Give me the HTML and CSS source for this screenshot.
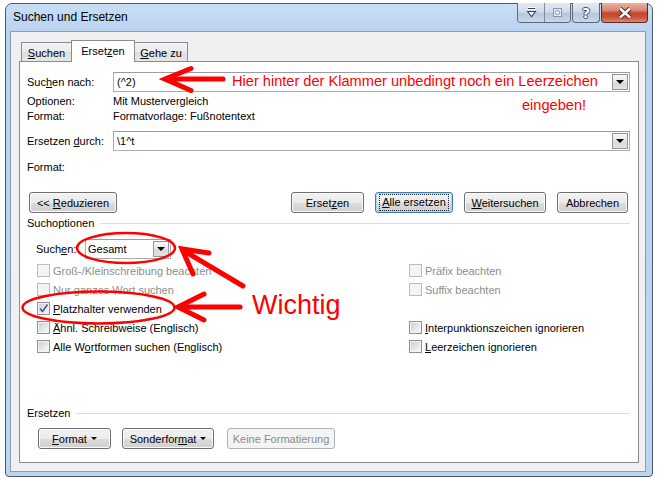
FILE: index.html
```html
<!DOCTYPE html>
<html lang="de">
<head>
    <meta charset="UTF-8">
    <title>Suchen und Ersetzen</title>
    <link rel="stylesheet" href="styles.css">
</head>
<body>
    <div class="window">
        <div class="titlebar">
            <span class="title">Suchen und Ersetzen</span>
            <div class="caption">
                <div class="cap-group">
                    <span class="cap-btn first">
                        <svg width="11" height="11" viewBox="0 0 11 11">
                            <path d="M2 1.5 H9" stroke="#fff" stroke-width="3"/>
                            <path d="M2 1.5 H9" stroke="#34465c" stroke-width="1.2"/>
                            <path d="M1.5 4.5 L5.5 9.5 L9.5 4.5 Z" fill="#fff" stroke="#34465c" stroke-width="1.1"/>
                        </svg>
                    </span>
                    <span class="cap-btn">
                        <svg width="11" height="11" viewBox="0 0 11 11">
                            <rect x="1.5" y="1.5" width="8" height="8" fill="#e9eef4" stroke="#8796a8"/>
                            <circle cx="5.5" cy="5.5" r="2.2" fill="none" stroke="#8796a8"/>
                        </svg>
                    </span>
                </div>
                <span class="cap-btn help">?</span>
                <span class="cap-btn close">
                    <svg width="16" height="12" viewBox="0 0 16 12">
                        <path d="M3 1.5 L13 10.5 M13 1.5 L3 10.5" stroke="#3d1a12" stroke-width="4.4"/>
                        <path d="M3 1.5 L13 10.5 M13 1.5 L3 10.5" stroke="#fff" stroke-width="2.6"/>
                    </svg>
                </span>
            </div>
        </div>

        <div class="client">
            <div class="tabs">
                <span class="tab tab-first"><span><u>S</u>uchen</span></span>
                <span class="tab active"><span>Erset<u>z</u>en</span></span>
                <span class="tab tab-last"><span><u>G</u>ehe zu</span></span>
            </div>

            <div class="pane">
                <div class="field-row first-field">
                    <span class="field-label">Suc<u>h</u>en nach:</span>
                    <div class="combo">
                        <span>(^2)</span>
                        <span class="combo-arrow"><i class="tri"></i></span>
                    </div>
                </div>
                <div class="info">
                    <span class="field-label">Optionen:</span>
                    <span>Mit Mustervergleich</span>
                </div>
                <div class="info">
                    <span class="field-label">Format:</span>
                    <span>Formatvorlage: Fußnotentext</span>
                </div>

                <div class="field-row second-field">
                    <span class="field-label">Ersetzen <u>d</u>urch:</span>
                    <div class="combo">
                        <span>\1^t</span>
                        <span class="combo-arrow"><i class="tri"></i></span>
                    </div>
                </div>
                <div class="info format-line">
                    <span class="field-label">Format:</span>
                </div>

                <div class="btn-row">
                    <span class="btn btn-reduce"><span>&lt;&lt; <u>R</u>eduzieren</span></span>
                    <div class="btn-group">
                        <span class="btn w-ersetzen"><span>Erset<u>z</u>en</span></span>
                        <span class="btn w-alle focused"><span class="focus-rect"><u>A</u>lle ersetzen</span></span>
                        <span class="btn w-weiter"><span><u>W</u>eitersuchen</span></span>
                        <span class="btn w-abbrechen"><span>Abbrechen</span></span>
                    </div>
                </div>

                <div class="group-title search-options"><span>Suchoptionen</span></div>

                <div class="scope-row">
                    <span class="scope-label">Such<u>e</u>n:</span>
                    <div class="combo scope-combo">
                        <span>Gesamt</span>
                        <span class="combo-arrow"><i class="tri"></i></span>
                    </div>
                </div>

                <div class="options">
                    <label class="opt disabled"><span class="box"></span><span>Groß-/Kleinschreibung beachten</span></label>
                    <label class="opt disabled"><span class="box"></span><span>Präfix beachten</span></label>

                    <label class="opt disabled"><span class="box"></span><span>Nur ganzes Wort suchen</span></label>
                    <label class="opt disabled"><span class="box"></span><span>Suffix beachten</span></label>

                    <label class="opt">
                        <span class="box checked">
                            <svg width="11" height="11" viewBox="0 0 11 11"><path d="M2 5.5 L4.5 8.5 L9.5 1.5" fill="none" stroke="#42588a" stroke-width="1.6"/></svg>
                        </span>
                        <span><u>P</u>latzhalter verwenden</span>
                    </label>
                    <span></span>

                    <label class="opt"><span class="box"></span><span><u>Ä</u>hnl. Schreibweise (Englisch)</span></label>
                    <label class="opt"><span class="box"></span><span><u>I</u>nterpunktionszeichen ignorieren</span></label>

                    <label class="opt"><span class="box"></span><span>Alle W<u>o</u>rtformen suchen (Englisch)</span></label>
                    <label class="opt"><span class="box"></span><span><u>L</u>eerzeichen ignorieren</span></label>
                </div>

                <div class="group-title replace-group"><span>Ersetzen</span></div>

                <div class="bottom-row">
                    <span class="btn w-format"><span><u>F</u>ormat</span><i class="tri small"></i></span>
                    <span class="btn w-sonder"><span>Sonderfor<u>m</u>at</span><i class="tri small"></i></span>
                    <span class="btn w-keine disabled-btn"><span>Keine Formatierung</span></span>
                </div>
            </div>
        </div>
    </div>

    <!-- red annotations drawn over the dialog -->
    <svg class="marks" width="657" height="479" viewBox="0 0 657 479">
        <g fill="none" stroke="#ff0000" stroke-width="5" stroke-linecap="round" stroke-linejoin="miter">
            <path d="M223 79 H168"/>
            <path d="M191 68.5 L165 79 L191 90.5"/>

            <path d="M243 286 L186 252"/>
            <path d="M209 253 L182 249 L193 274"/>

            <path d="M240 307 H182"/>
            <path d="M204 294 L178 307 L204 320"/>
        </g>
        <g fill="none" stroke="#ff0000" stroke-width="2.5">
            <ellipse cx="126" cy="248" rx="49" ry="15"/>
            <ellipse cx="98.5" cy="307.5" rx="76" ry="16"/>
        </g>
    </svg>
    <div class="note note-hier">Hier hinter der Klammer unbedingt noch ein Leerzeichen</div>
    <div class="note note-eingeben">eingeben!</div>
    <div class="note note-wichtig">Wichtig</div>
</body>
</html>
```

FILE: styles.css
```css
body {
    margin: 0;
    width: 657px;
    height: 479px;
    position: relative;
    overflow: hidden;
    background-color: white;
    color: black;
    font-family: "Liberation Sans", Arial, sans-serif;
    font-size: 11px;
}

u {
    text-decoration: underline;
    text-underline-offset: 1px;
}

/* window frame */
.window {
    margin: 3px 0 0 5px;
    width: 648px;
    height: 474px;
    box-sizing: border-box;
    border: 1px solid #4d5a69;
    border-radius: 7px 7px 4px 4px;
    background: linear-gradient(#c9def5, #b9d2ef 28px, #bcd6f2);
    display: flex;
    flex-direction: column;
}

.titlebar {
    height: 27px;
    display: flex;
    align-items: flex-start;
}

.title {
    padding: 6px 0 0 7px;
    font-size: 12px;
    line-height: 15px;
    color: #000;
}

.caption {
    margin-left: auto;
    margin-right: 4px;
    margin-top: -1px;
    display: flex;
    gap: 1px;
}

.cap-group {
    display: flex;
    border: 1px solid #5b6a7d;
    border-top: none;
    border-radius: 0 0 4px 4px;
    overflow: hidden;
}

.cap-btn {
    width: 26px;
    height: 19px;
    display: flex;
    align-items: center;
    justify-content: center;
    background: linear-gradient(#e1e9f3, #d0dcea 48%, #b7c8dc 52%, #c8d7e8);
}

.cap-group .cap-btn.first {
    border-right: 1px solid #7c8ca0;
}

.cap-group .cap-btn + .cap-btn {
    width: 25px;
}

.help {
    width: 26px;
    border: 1px solid #5b6a7d;
    border-top: none;
    border-radius: 0 0 4px 4px;
    font-family: "DejaVu Sans", sans-serif;
    font-weight: bold;
    font-size: 14px;
    color: #fff;
    text-shadow: 1px 0 0 #3a4d64, -1px 0 0 #3a4d64, 0 1px 0 #3a4d64, 0 -1px 0 #3a4d64;
}

.close {
    width: 45px;
    border: 1px solid #5a2a20;
    border-top: none;
    border-radius: 0 0 4px 4px;
    background: linear-gradient(#eab2a2, #d98470 40%, #c5462d 52%, #c9513a 75%, #de8a70);
}

/* client area */
.client {
    flex: 1;
    margin: 0 6px 4px 4px;
    border: 1px solid #8a9db5;
    background-color: #f0f0f0;
    padding: 8px 6px 8px 8px;
    display: flex;
    flex-direction: column;
}

.tabs {
    display: flex;
    align-items: flex-start;
    margin-left: 2px;
    margin-bottom: -1px;
    height: 22px;
    position: relative;
    z-index: 1;
}

.tab {
    margin-top: 2px;
    height: 19px;
    box-sizing: border-box;
    border: 1px solid #898c95;
    border-bottom: none;
    background: linear-gradient(#f3f3f3, #ebebeb 50%, #dedede 50%, #e6e6e6);
    display: flex;
    align-items: center;
    justify-content: center;
    padding-top: 2px;
}

.tab-first {
    width: 51px;
}

.tab.active {
    margin-top: 0;
    margin-left: -1px;
    width: 64px;
    height: 22px;
    padding-top: 0;
    padding-bottom: 1px;
    background: white;
    position: relative;
    z-index: 2;
}

.tab-last {
    margin-left: -1px;
    width: 54px;
}

.pane {
    flex: 1;
    background-color: white;
    border: 1px solid #898c95;
    padding: 0 8px 0 7px;
}

.field-row {
    display: flex;
    align-items: center;
}

.first-field {
    margin-top: 10px;
}

.second-field {
    margin-top: 7px;
}

.field-label {
    width: 86px;
    flex-shrink: 0;
}

.combo {
    flex: 1;
    height: 20px;
    box-sizing: border-box;
    border: 1px solid #abadb3;
    border-top-color: #9a9ca3;
    padding-left: 3px;
    display: flex;
    align-items: center;
    background: white;
}

.combo-arrow {
    margin-left: auto;
    margin-right: 1px;
    width: 16px;
    height: 16px;
    box-sizing: border-box;
    border: 1px solid #8f959d;
    background: linear-gradient(#f7f7f7, #e8e8e8 50%, #d9d9d9 51%, #e3e3e3);
    display: flex;
    align-items: center;
    justify-content: center;
}

.tri {
    width: 0;
    height: 0;
    border-left: 4px solid transparent;
    border-right: 4px solid transparent;
    border-top: 4px solid black;
}

.tri.small {
    border-left-width: 3px;
    border-right-width: 3px;
    border-top-width: 3px;
    margin-left: 4px;
    margin-bottom: 1px;
}

.info {
    display: flex;
    line-height: 15px;
}

.first-field + .info {
    margin-top: 2px;
}

.format-line {
    margin-top: 9px;
}

/* buttons */
.btn {
    height: 21px;
    box-sizing: border-box;
    border: 1px solid #707070;
    border-radius: 3px;
    background: linear-gradient(#f2f2f2, #ebebeb 50%, #dddddd 50%, #cfcfcf);
    box-shadow: inset 0 0 0 1px #fbfbfb;
    display: flex;
    align-items: center;
    justify-content: center;
    user-select: none;
}

.btn-row {
    display: flex;
    margin-top: 17px;
}

.btn-reduce {
    margin-left: 2px;
    width: 88px;
}

.btn-group {
    margin-left: auto;
    margin-right: 2px;
    display: flex;
    gap: 11px;
}

.w-ersetzen {
    width: 73px;
}

.w-alle {
    width: 78px;
}

.w-weiter {
    width: 82px;
}

.w-abbrechen {
    width: 71px;
}

.focused {
    border-color: #3c7fb1;
    box-shadow: inset 0 0 0 1px #9fdcf7;
}

.focus-rect {
    outline: 1px dotted #222;
    padding: 1px 2px;
    line-height: 13px;
}

.group-title {
    display: flex;
    align-items: center;
    gap: 6px;
    line-height: 15px;
}

.group-title::after {
    content: "";
    flex: 1;
    height: 1px;
    background-color: #d5dfe5;
}

.search-options {
    margin-top: 3px;
}

.scope-row {
    display: flex;
    align-items: center;
    margin-top: 8px;
    padding-left: 9px;
}

.scope-label {
    width: 49px;
}

.scope-combo {
    flex: none;
    width: 86px;
    padding-left: 2px;
}

/* check boxes */
.options {
    display: grid;
    grid-template-columns: 372px 1fr;
    grid-auto-rows: 19px;
    margin-top: 2px;
    padding-left: 10px;
}

.opt {
    display: flex;
    align-items: center;
    gap: 3px;
}

.box {
    width: 13px;
    height: 13px;
    box-sizing: border-box;
    border: 1px solid #8e8f8f;
    background: linear-gradient(135deg, #c8ccd2, #eceef0 70%, #f7f7f7);
    box-shadow: inset 0 0 0 1px #f4f4f4;
    display: flex;
    align-items: center;
    justify-content: center;
}

.disabled {
    color: #8d8d8d;
}

.disabled .box {
    border-color: #bdbdbd;
    background: #f4f4f4;
    box-shadow: none;
}

.replace-group {
    margin-top: 50px;
}

.bottom-row {
    display: flex;
    margin-top: 7px;
    padding-left: 11px;
}

.w-format {
    width: 73px;
}

.w-sonder {
    margin-left: 11px;
    width: 92px;
}

.w-keine {
    margin-left: 13px;
    width: 108px;
}

.disabled-btn {
    border-color: #adb2b5;
    background: #f4f4f4;
    box-shadow: none;
    color: #8b8b8b;
}

/* annotations */
.marks {
    position: absolute;
    left: 0;
    top: 0;
    pointer-events: none;
}

.note {
    position: absolute;
    color: #ff0000;
    font-family: "Liberation Sans", Arial, sans-serif;
    font-size: 14.6px;
    line-height: 15px;
    white-space: nowrap;
}

.note-hier {
    left: 232px;
    top: 74px;
}

.note-eingeben {
    left: 522px;
    top: 98px;
}

.note-wichtig {
    left: 252px;
    top: 292px;
    font-size: 27px;
    line-height: 27px;
}
```
